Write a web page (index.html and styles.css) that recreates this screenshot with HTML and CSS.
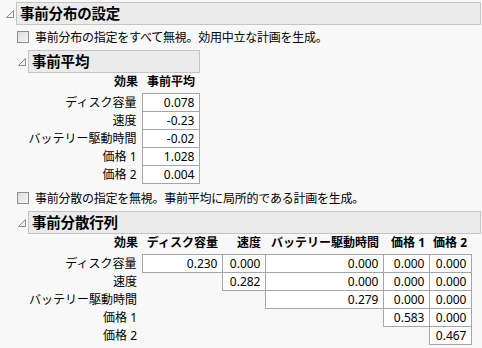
FILE: index.html
```html
<!DOCTYPE html>
<html lang="ja">
<head>
  <meta charset="UTF-8">
  <title>事前分布の設定</title>
  <link rel="stylesheet" href="styles.css">
</head>
<body>
  <div class="outline">
    <div class="head">
      <span class="tri"><svg width="8" height="8" viewBox="0 0 8 8"><polygon points="7.5,0.5 7.5,7.5 0.5,7.5" fill="#f2f2f2" stroke="#8c8c8c"/></svg></span>
      <div class="bar wide"><h1>事前分布の設定</h1></div>
    </div>

    <div class="content">
      <label class="check first"><span class="box"></span>事前分布の指定をすべて無視。効用中立な計画を生成。</label>

      <div class="section">
        <div class="head">
          <span class="tri"><svg width="8" height="8" viewBox="0 0 8 8"><polygon points="7.5,0.5 7.5,7.5 0.5,7.5" fill="#f2f2f2" stroke="#8c8c8c"/></svg></span>
          <div class="bar mean"><h2>事前平均</h2></div>
        </div>
        <table class="grid">
          <colgroup>
            <col class="c-label">
            <col class="c-mean">
          </colgroup>
          <thead>
            <tr><th class="label">効果</th><th>事前平均</th></tr>
          </thead>
          <tbody>
            <tr><td class="label">ディスク容量</td><td class="v">0.078</td></tr>
            <tr><td class="label">速度</td><td class="v">-0.23</td></tr>
            <tr><td class="label">バッテリー駆動時間</td><td class="v">-0.02</td></tr>
            <tr><td class="label">価格 1</td><td class="v">1.028</td></tr>
            <tr><td class="label">価格 2</td><td class="v">0.004</td></tr>
          </tbody>
        </table>
      </div>

      <label class="check second"><span class="box"></span>事前分散の指定を無視。事前平均に局所的である計画を生成。</label>

      <div class="section">
        <div class="head">
          <span class="tri"><svg width="8" height="8" viewBox="0 0 8 8"><polygon points="7.5,0.5 7.5,7.5 0.5,7.5" fill="#f2f2f2" stroke="#8c8c8c"/></svg></span>
          <div class="bar wide"><h2>事前分散行列</h2></div>
        </div>
        <table class="grid">
          <colgroup>
            <col class="c-label">
            <col class="c1">
            <col class="c2">
            <col class="c3">
            <col class="c4">
            <col class="c5">
          </colgroup>
          <thead>
            <tr>
              <th class="label">効果</th>
              <th>ディスク容量</th>
              <th>速度</th>
              <th>バッテリー駆動時間</th>
              <th>価格 1</th>
              <th>価格 2</th>
            </tr>
          </thead>
          <tbody>
            <tr><td class="label">ディスク容量</td><td class="v">0.230</td><td class="v">0.000</td><td class="v">0.000</td><td class="v">0.000</td><td class="v">0.000</td></tr>
            <tr><td class="label">速度</td><td></td><td class="v">0.282</td><td class="v">0.000</td><td class="v">0.000</td><td class="v">0.000</td></tr>
            <tr><td class="label">バッテリー駆動時間</td><td></td><td></td><td class="v">0.279</td><td class="v">0.000</td><td class="v">0.000</td></tr>
            <tr><td class="label">価格 1</td><td></td><td></td><td></td><td class="v">0.583</td><td class="v">0.000</td></tr>
            <tr><td class="label">価格 2</td><td></td><td></td><td></td><td></td><td class="v">0.467</td></tr>
          </tbody>
        </table>
      </div>
    </div>
  </div>
</body>
</html>
```

FILE: styles.css
```css
body {
  margin: 0;
  background-color: #f8f8f8;
  font-family: "Noto Sans", "Noto Sans CJK JP", sans-serif;
  font-size: 12px;
  color: #000;
}
.outline {
  padding: 2px 1px 0 4px;
}
.head {
  display: flex;
  align-items: center;
}
.tri {
  width: 12px;
  display: flex;
  justify-content: center;
}
.tri svg {
  margin-top: 1px;
}
.bar {
  height: 21px;
  background-color: #ebebeb;
  border: 1px solid #c4c4c4;
  display: flex;
  align-items: center;
  padding-left: 3px;
}
.bar.wide {
  flex: 1;
}
.bar.mean {
  width: 167px;
}
h1, h2 {
  margin: 0;
  font-size: 14.5px;
  font-weight: bold;
  line-height: 21px;
  letter-spacing: -0.2px;
}
.content {
  padding-left: 12px;
}
.check {
  display: flex;
  align-items: center;
  height: 14px;
  margin-left: 1px;
  letter-spacing: -0.25px;
}
.check.first {
  margin-top: 5px;
  margin-bottom: 6px;
}
.check.second {
  margin-top: 7px;
  margin-bottom: 6px;
}
.box {
  width: 10px;
  height: 10px;
  border: 1px solid #8e8e8e;
  background: linear-gradient(135deg, #dcdcdc, #f6f6f6);
  margin-right: 6px;
  flex-shrink: 0;
}
.grid {
  border-collapse: collapse;
  table-layout: fixed;
  margin-left: 12px;
}
.grid th, .grid td {
  padding: 0 4px 0 0;
  text-align: right;
  white-space: nowrap;
}
.grid th {
  height: 20px;
  vertical-align: top;
  line-height: 18px;
  font-weight: bold;
}
.grid td {
  height: 17px;
  line-height: 17px;
}
.grid td.v {
  background-color: #fff;
  border: 1px solid #a6a6a6;
}
.grid td.label {
  padding-right: 5px;
}
.c-label { width: 114px; }
.c-mean { width: 57px; }
.c1 { width: 80px; }
.c2 { width: 43px; }
.c3 { width: 118px; }
.c4 { width: 46px; }
.c5 { width: 42px; }
```
